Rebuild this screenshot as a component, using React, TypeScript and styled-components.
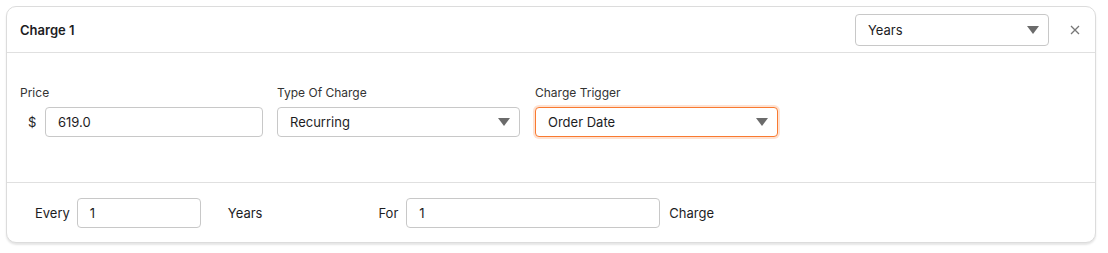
import React from "react";
import styled, { createGlobalStyle } from "styled-components";

const Global = createGlobalStyle`
  html, body { margin: 0; padding: 0; background: #fff; }
  body { font-family: Inter, "Helvetica Neue", Arial, sans-serif; color: #1d1d1f; }
  * { box-sizing: border-box; }
`;

const Page = styled.div`
  padding: 6px 12px 11px 6px;
`;

const Card = styled.div`
  width: 1090px;
  height: 237px;
  border: 1px solid #dcdcdc;
  border-radius: 10px;
  background: #fff;
  box-shadow: 0 2px 2px rgba(0, 0, 0, 0.1);
  display: flex;
  flex-direction: column;
  overflow: hidden;
`;

const Header = styled.div`
  height: 46px;
  display: flex;
  align-items: center;
  padding: 0 7px 0 13px;
  border-bottom: 1px solid #e0e0e0;
`;

const Title = styled.div`
  font-size: 13px;
  font-weight: 600;
  color: #1d1d1f;
  flex: 1;
`;

const Body = styled.div`
  height: 130px;
  padding: 33px 13px 0;
  display: flex;
  gap: 14px;
  border-bottom: 1px solid #e0e0e0;
`;

const Field = styled.div<{ $ml?: number }>`
  width: 243px;
  margin-left: ${(p) => p.$ml ?? 0}px;
  display: flex;
  flex-direction: column;
  gap: 7px;
`;

const Label = styled.div`
  font-size: 12px;
  color: #333;
  line-height: 14px;
`;

const Row = styled.div`
  display: flex;
  align-items: center;
`;

const Currency = styled.span`
  font-size: 13px;
  color: #1d1d1f;
  width: 25px;
  padding-left: 8px;
`;

const Input = styled.div<{ $w: number }>`
  width: ${(p) => p.$w}px;
  height: 30px;
  border: 1px solid #c8c8c8;
  border-radius: 4px;
  display: flex;
  align-items: center;
  padding: 0 12px;
  font-size: 13px;
  color: #1d1d1f;
  background: #fff;
`;

const Select = styled.div<{ $w: number; $h?: number; $focus?: boolean }>`
  width: ${(p) => p.$w}px;
  height: ${(p) => p.$h ?? 30}px;
  border: 1px solid ${(p) => (p.$focus ? "#f97a30" : "#c8c8c8")};
  box-shadow: ${(p) => (p.$focus ? "0 0 0 2px rgba(249, 122, 48, 0.22)" : "none")};
  border-radius: 4px;
  display: flex;
  align-items: center;
  justify-content: space-between;
  padding: 0 9px 0 12px;
  font-size: 13px;
  color: #1d1d1f;
  background: #fff;
`;

const Caret = styled.span`
  width: 0;
  height: 0;
  border-left: 6px solid transparent;
  border-right: 6px solid transparent;
  border-top: 8px solid #6b6b6b;
`;

const Close = styled.button`
  width: 26px;
  height: 26px;
  margin-left: 13px;
  border: none;
  background: transparent;
  display: flex;
  align-items: center;
  justify-content: center;
  padding: 0;
`;

const Footer = styled.div`
  flex: 1;
  display: flex;
  align-items: center;
  padding: 0 0 0 28px;
  font-size: 13px;
`;

const Text = styled.span<{ $ml?: number; $mr?: number }>`
  margin-left: ${(p) => p.$ml ?? 0}px;
  margin-right: ${(p) => p.$mr ?? 0}px;
  color: #1d1d1f;
`;

export default function App() {
  return (
    <>
      <Global />
      <Page>
        <Card>
          <Header>
            <Title>Charge 1</Title>
            <Select $w={194} $h={32}>
              <span>Years</span>
              <Caret />
            </Select>
            <Close aria-label="close">
              <svg width="10" height="10" viewBox="0 0 10 10">
                <path d="M1 1L9 9M9 1L1 9" stroke="#777" strokeWidth="1.3" />
              </svg>
            </Close>
          </Header>
          <Body>
            <Field>
              <Label>Price</Label>
              <Row>
                <Currency>$</Currency>
                <Input $w={218}>619.0</Input>
              </Row>
            </Field>
            <Field>
              <Label>Type Of Charge</Label>
              <Select $w={243}>
                <span>Recurring</span>
                <Caret />
              </Select>
            </Field>
            <Field $ml={1}>
              <Label>Charge Trigger</Label>
              <Select $w={243} $focus>
                <span>Order Date</span>
                <Caret />
              </Select>
            </Field>
          </Body>
          <Footer>
            <Text $mr={7}>Every</Text>
            <Input $w={124}>1</Input>
            <Text $ml={27}>Years</Text>
            <Text $ml={116} $mr={8}>For</Text>
            <Input $w={254}>1</Input>
            <Text $ml={9}>Charge</Text>
          </Footer>
        </Card>
      </Page>
    </>
  );
}
